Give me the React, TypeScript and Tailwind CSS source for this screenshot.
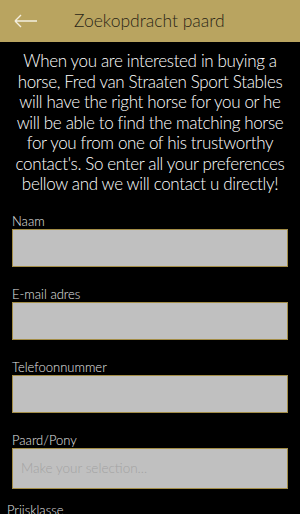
import React from 'react';

const fields = [
  { label: 'Naam', type: 'text' },
  { label: 'E-mail adres', type: 'email' },
  { label: 'Telefoonnummer', type: 'tel' },
];

const intro = [
  'When you are interested in buying a',
  'horse, Fred van Straaten Sport Stables',
  'will have the right horse for you or he',
  'will be able to find the matching horse',
  'for you from one of his trustworthy',
  "contact's. So enter all your preferences",
  'bellow and we will contact u directly!',
];

export default function App() {
  return (
    <div className="min-h-[514px] w-[300px] bg-black font-['Lato','Open_Sans',sans-serif] overflow-hidden">
      {/* Header */}
      <div className="h-[42px] bg-[#b9a460] flex items-center">
        <button className="w-[52px] h-full flex items-center pl-[14px]">
          <svg width="24" height="14" viewBox="0 0 24 14" fill="none">
            <path d="M1 7H23M1 7L7 1M1 7L7 13" stroke="#f4efe0" strokeWidth="1.4" />
          </svg>
        </button>
        <h1 className="ml-[22px] text-[17.5px] font-light text-[#2a2416]">Zoekopdracht paard</h1>
      </div>

      {/* Intro */}
      <p className="mt-[9px] text-center text-white text-[17px] leading-[20.5px] font-light tracking-[-0.35px]">
        {intro.map((line) => (
          <span key={line} className="block whitespace-nowrap">{line}</span>
        ))}
      </p>

      {/* Form */}
      <form className="mt-[18px] px-[12px] flex flex-col gap-[19px]">
        {fields.map((f) => (
          <div key={f.label}>
            <label className="block text-[13px] leading-[16px] text-[#e6e6e6] font-light">{f.label}</label>
            <input
              type={f.type}
              className="block w-full h-[38px] bg-[#c0c0c0] border border-[#a38d47] outline-none px-2"
            />
          </div>
        ))}
        <div>
          <label className="block text-[13px] leading-[16px] text-[#e6e6e6] font-light">Paard/Pony</label>
          <div className="h-[41px] bg-[#c0c0c0] border border-[#a38d47] flex items-center pl-[8px] text-[13.5px] text-[#a3a3a3] font-light">
            Make your selection...
          </div>
        </div>
      </form>
      <div className="mt-[13px] pl-[7px] text-[13px] leading-[16px] text-[#e6e6e6] font-light">Prijsklasse</div>
    </div>
  );
}
